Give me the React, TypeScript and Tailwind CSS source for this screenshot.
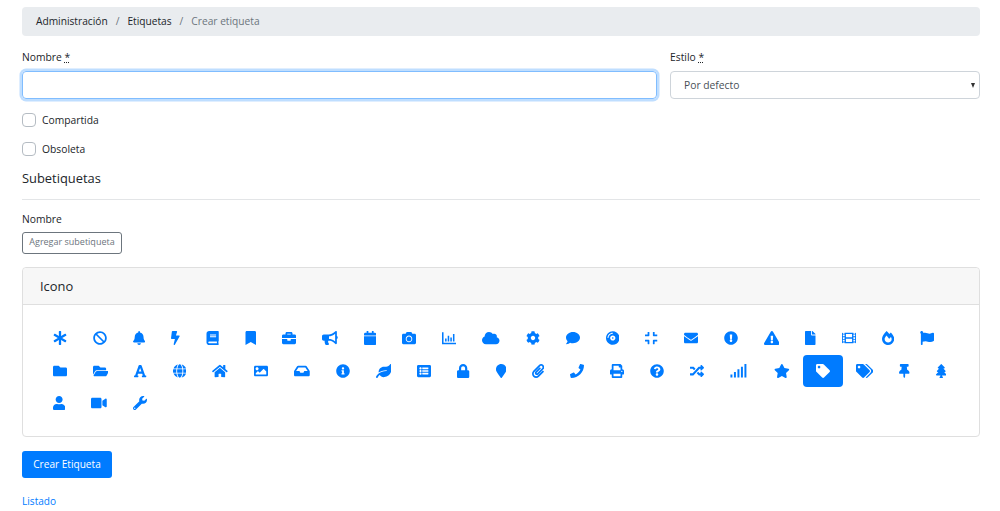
import React from "react";
import {
  FaAsterisk, FaBan, FaBell, FaBolt, FaBook, FaBookmark, FaBriefcase, FaBullhorn, FaCalendar, FaCamera,
  FaCloud, FaCog, FaComment, FaCompactDisc, FaCompress, FaEnvelope, FaExclamationCircle, FaExclamationTriangle,
  FaFile, FaFilm, FaFireAlt, FaFlag, FaFolder, FaFolderOpen, FaFont, FaGlobe, FaHome, FaImage, FaInbox,
  FaInfoCircle, FaLeaf, FaListAlt, FaLock, FaMapMarker, FaPaperclip, FaPhone, FaPrint, FaQuestionCircle,
  FaRandom, FaStar, FaTag, FaTags, FaThumbtack, FaTree, FaUser, FaVideo, FaWrench,
} from "react-icons/fa";

const w8 = "h-[14px] w-[8.75px] fill-current";
const w10 = "h-[14px] w-[10.5px] fill-current";
const w11 = "h-[14px] w-[11.5px] fill-current";
const w12 = "h-[14px] w-[12.25px] fill-current";
const w12b = "h-[14px] w-[13.25px] fill-current";
const w13 = "h-[14px] w-[13.56px] fill-current";
const w14 = "h-[14px] w-[14px] fill-current";
const w15 = "h-[14px] w-[15.75px] fill-current";
const w17 = "h-[14px] w-[17.5px] fill-current";

const ChartThin = () => (
  <svg viewBox="0 0 512 512" className={w14}>
    <path d="M0 48h56v384h456v56H0z" />
    <path d="M112 272h56v112h-56zM208 176h56v208h-56zM304 240h56v144h-56zM400 112h56v272h-56z" />
  </svg>
);

const SignalThin = () => (
  <svg viewBox="0 0 640 512" className={w17}>
    <path d="M16 384h72v112H16zM144 288h72v208h-72zM272 192h72v304h-72zM400 96h72v400h-72zM528 0h72v496h-72z" />
  </svg>
);

const icons: [any, string][] = [
  [FaAsterisk, w14], [FaBan, w14], [FaBell, w12], [FaBolt, w8], [FaBook, w12b], [FaBookmark, w11], [FaBriefcase, w14],
  [FaBullhorn, w15], [FaCalendar, w12], [FaCamera, w14], [ChartThin, w14], [FaCloud, w17], [FaCog, w14], [FaComment, w14],
  [FaCompactDisc, w13], [FaCompress, w12], [FaEnvelope, w14], [FaExclamationCircle, w14], [FaExclamationTriangle, w15],
  [FaFile, w10], [FaFilm, w14], [FaFireAlt, w12], [FaFlag, w14], [FaFolder, w14], [FaFolderOpen, w15], [FaFont, w12],
  [FaGlobe, w13], [FaHome, w15], [FaImage, w14], [FaInbox, w15], [FaInfoCircle, w14], [FaLeaf, w15], [FaListAlt, w14],
  [FaLock, w12], [FaMapMarker, w10], [FaPaperclip, w12], [FaPhone, w14], [FaPrint, w14], [FaQuestionCircle, w14],
  [FaRandom, w14], [SignalThin, w17], [FaStar, w15], [FaTag, w14], [FaTags, w17], [FaThumbtack, w10], [FaTree, w10],
  [FaUser, w12], [FaVideo, w15], [FaWrench, w14],
];

const Req = () => <span className="underline decoration-dotted">*</span>;

export default function App() {
  return (
    <div className="bg-white h-[511px] overflow-hidden pl-[22px] pr-[20px] pt-[7px] text-[10.3px] leading-[16.5px] text-[#212529] font-['Open_Sans',sans-serif]">
      <nav className="h-[29px] bg-[#e9ecef] rounded-[4px] pl-[14px] flex items-center text-[10.2px]">
        <span>Administración</span>
        <span className="text-[#6c757d] px-[8px]">/</span>
        <span>Etiquetas</span>
        <span className="text-[#6c757d] px-[8px]">/</span>
        <span className="text-[#6c757d]">Crear etiqueta</span>
      </nav>

      <div className="flex gap-[13px] mt-[13px]">
        <div className="w-[635px]">
          <label className="block h-[22px]">Nombre <Req /></label>
          <input className="block w-full h-[28px] border border-[#80bdff] rounded-[4px] shadow-[0_0_0_2.5px_rgba(0,123,255,0.25)] outline-none" />
        </div>
        <div className="flex-1">
          <label className="block h-[22px]">Estilo <Req /></label>
          <div className="relative h-[28px] border border-[#ced4da] rounded-[4px] pl-[13px] flex items-center text-[#495057]">
            Por defecto
            <span className="absolute right-[4px] top-[10.5px] w-0 h-0 border-x-[2.5px] border-x-transparent border-t-[5px] border-t-[#333]" />
          </div>
        </div>
      </div>

      <div className="flex flex-col gap-[15px] mt-[14px]">
        <label className="flex items-center h-[14px] gap-[6px]">
          <span className="w-[14px] h-[14px] border border-[#b5bcc3] rounded-[4px] bg-white" />Compartida
        </label>
        <label className="flex items-center h-[14px] gap-[6px]">
          <span className="w-[14px] h-[14px] border border-[#b5bcc3] rounded-[4px] bg-white" />Obsoleta
        </label>
      </div>

      <h5 className="text-[12.9px] leading-[16px] mt-[14px]">Subetiquetas</h5>
      <hr className="mt-[13px] border-t border-[#e3e5e7]" />
      <div className="mt-[11px]">Nombre</div>
      <button className="mt-[4px] block w-[100px] h-[22px] border border-[#6c757d] rounded-[3px] text-[9px] text-[#6c757d]">Agregar subetiqueta</button>

      <section className="mt-[13px] border border-[#dfdfdf] rounded-[4px] h-[170px]">
        <header className="h-[37px] bg-[#f7f7f7] border-b border-[#dfdfdf] rounded-t-[4px] pl-[17px] pt-[1px] flex items-center text-[12.9px]">Icono</header>
        <div className="flex flex-wrap px-[16.5px] pt-[17.5px] text-[#007bff]">
          {icons.map(([Ic, c], i) => (
            <span key={i} className={`h-[32.5px] px-[13px] flex items-center rounded-[4px] ${i === 42 ? "bg-[#007bff] text-white" : ""}`}>
              <Ic className={c} />
            </span>
          ))}
        </div>
      </section>

      <button className="mt-[14px] block w-[90px] h-[27px] bg-[#007bff] text-white rounded-[3px] text-[10.1px]">Crear Etiqueta</button>
      <a className="block mt-[15px] text-[#007bff] text-[10.1px]">Listado</a>
    </div>
  );
}
